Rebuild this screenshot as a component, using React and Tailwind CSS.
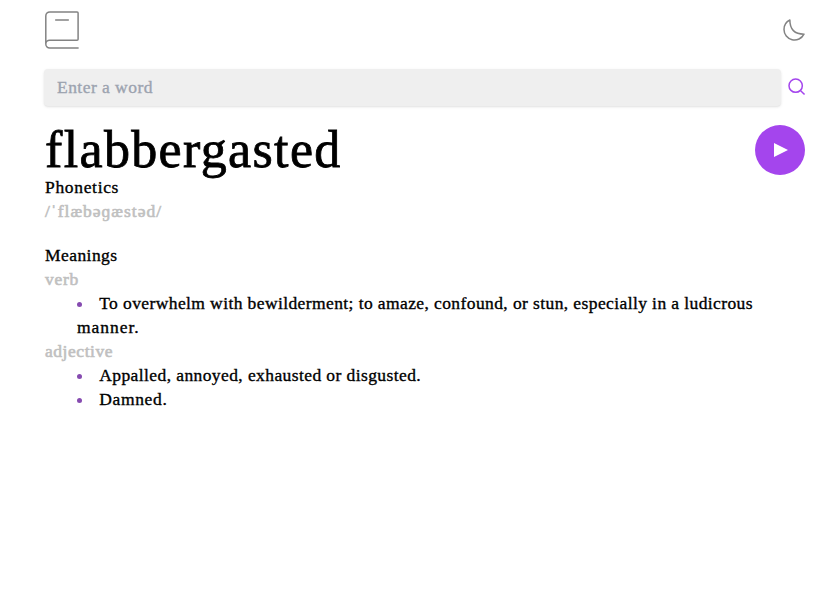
const meanings = [
  {
    part: 'verb',
    partClass: 'tracking-[0.75px]',
    definitions: [
      {
        text: 'To overwhelm with bewilderment; to amaze, confound, or stun, especially in a ludicrous ',
        className: 'tracking-[0.4px]',
        rest: 'manner.',
      },
    ],
  },
  {
    part: 'adjective',
    partClass: 'tracking-[0.55px]',
    definitions: [
      { text: 'Appalled, annoyed, exhausted or disgusted.', className: 'tracking-[0.41px]' },
      { text: 'Damned.', className: 'tracking-[0.65px]' },
    ],
  },
];

function BookIcon() {
  return (
    <svg width="34" height="38" viewBox="0 0 34 38" fill="none" stroke="#838383" strokeWidth="1.5" strokeLinecap="round">
      <path d="M.8 33V4.9A4 4 0 0 1 4.8.9H32.1a1 1 0 0 1 1 1V28.2a1 1 0 0 1-1 1H4.7a3.9 3.9 0 0 0 0 7.8H33.1" />
      <path d="M10.7 9H23.3" />
    </svg>
  );
}

function MoonIcon() {
  return (
    <svg width="22" height="22" viewBox="0 0 22 22" fill="none" stroke="#838383" strokeWidth="1.5" strokeLinecap="round" strokeLinejoin="round">
      <path d="M1 10.449a10.544 10.544 0 0 0 19.993 4.686C11.544 15.135 6.858 10.448 6.858 1A10.545 10.545 0 0 0 1 10.449Z" />
    </svg>
  );
}

function SearchIcon() {
  return (
    <svg width="18" height="18" viewBox="0 0 18 18" fill="none" stroke="#A445ED" strokeWidth="1.5">
      <path d="m12.663 12.663 3.887 3.887M1 7.664a6.665 6.665 0 1 0 13.33 0 6.665 6.665 0 0 0-13.33 0Z" />
    </svg>
  );
}

export default function App() {
  return (
    <main className="h-[601px] overflow-hidden bg-white pl-11 pr-[35px] font-['Liberation_Serif',serif] text-[17.5px] leading-6 text-black [-webkit-text-stroke:0.35px]">
      <header className="flex h-[69px] items-start justify-between pl-px pt-[11px]">
        <BookIcon />
        <button className="mt-2" aria-label="Toggle dark mode"><MoonIcon /></button>
      </header>

      <form className="flex h-[37px] items-start justify-between">
        <input
          className="h-[37px] w-[737px] rounded bg-[#efefef] px-[13px] tracking-[0.46px] shadow-sm outline-none placeholder:text-[#9ca3af]"
          placeholder="Enter a word"
        />
        <button type="button" className="-mr-px mt-[9px]" aria-label="Search"><SearchIcon /></button>
      </form>

      <section className="pl-px">
        <div className="mt-[19px] flex h-[50px] items-start justify-between">
          <h1 className="text-[52px] leading-[49px] tracking-[1.35px] [-webkit-text-stroke:0.8px]">flabbergasted</h1>
          <button className="flex size-[50px] items-center justify-center rounded-full bg-[#A445ED] pl-[3px]" aria-label="Play">
            <svg width="15" height="16" viewBox="0 0 15 16" fill="white"><path d="M0 1v14l14-7z" /></svg>
          </button>
        </div>
        <h2 className="tracking-[0.67px]">Phonetics</h2>
        <p className="tracking-[1px] text-[#c0c0c0] [-webkit-text-stroke:0.6px]">/ˈflæbəɡæstəd/</p>

        <h2 className="mt-5 tracking-[0.44px]">Meanings</h2>
        {meanings.map((meaning) => (
          <div key={meaning.part}>
            <h3 className="text-[#c0c0c0] [-webkit-text-stroke:0.6px]"><span className={meaning.partClass}>{meaning.part}</span></h3>
            <ul className="list-inside list-disc px-8 marker:text-[#864bb0]">
              {meaning.definitions.map((d) => (
                <li key={d.text}>
                  <span className="-ml-[1.3px]">
                    <span className={d.className}>{d.text}</span>
                    {d.rest && <span className="tracking-[0.95px]">{d.rest}</span>}
                  </span>
                </li>
              ))}
            </ul>
          </div>
        ))}
      </section>
    </main>
  );
}
